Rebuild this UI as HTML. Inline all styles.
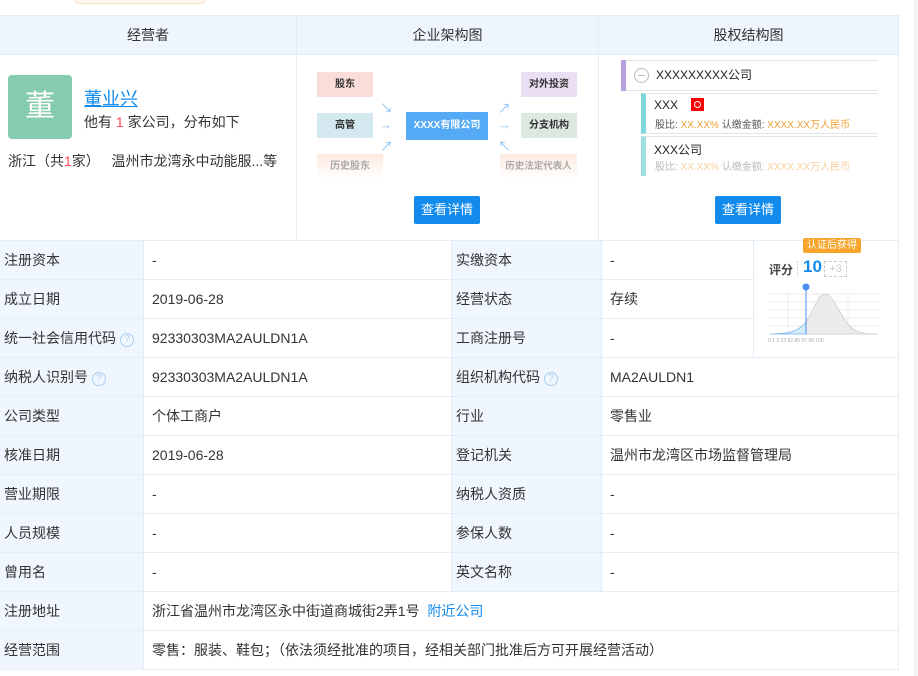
<!DOCTYPE html>
<html><head><meta charset="utf-8"><style>
*{margin:0;padding:0;box-sizing:border-box}
body{width:918px;height:676px;overflow:hidden;background:#fff;font-family:"Liberation Sans","Noto Sans CJK SC",sans-serif;color:#333;font-size:14px;position:relative}
.a{position:absolute}
.hd{position:absolute;top:15px;height:40px;background:#eef5fd;border:1px solid #e3edf8;text-align:center;line-height:38px;font-size:14px;color:#333}
.bd{position:absolute;top:54px;height:187px;border:1px solid #e3edf8;border-top:none}
.c{position:absolute;height:40px;border:1px solid #e3edf8;line-height:38px;padding-left:8px;white-space:nowrap}
.l{background:#f0f6fd;padding-left:4px}
.q{display:inline-block;width:14px;height:14px;border:1px solid #a9cdf0;border-radius:50%;color:#a9cdf0;font-size:10px;line-height:12px;text-align:center;vertical-align:1px;margin-left:4px}
.bx{position:absolute;height:25px;line-height:25px;text-align:center;font-size:10px;font-weight:bold;color:#333;white-space:nowrap;overflow:hidden}
.btn{position:absolute;width:66px;height:28px;background:#128bed;color:#fff;border-radius:2px;text-align:center;line-height:28px;font-size:13px}
.ar{position:absolute;color:#8cc4f5;font-size:13px}
</style></head><body>
<div class="a" style="left:75px;top:-2px;width:130px;height:6px;background:#fff8ec;border:1px solid #fae3c0;border-radius:3px"></div>
<div class="a" style="left:914px;top:0;width:4px;height:676px;background:#f3f3f3"></div>

<div class="hd" style="left:-1px;width:298px">经营者</div>
<div class="hd" style="left:296px;width:303px">企业架构图</div>
<div class="hd" style="left:598px;width:301px">股权结构图</div>
<div class="bd" style="left:-1px;width:298px"></div>
<div class="bd" style="left:296px;width:303px"></div>
<div class="bd" style="left:598px;width:301px"></div>

<div class="a" style="left:8px;top:75px;width:64px;height:64px;background:#85cbad;border-radius:4px;color:#fff;font-size:30px;text-align:center;line-height:64px">董</div>
<div class="a" style="left:84px;top:85px;font-size:18px;color:#128bed;text-decoration:underline">董业兴</div>
<div class="a" style="left:84px;top:112px;font-size:14px">他有 <span style="color:#fd485e">1</span> 家公司，分布如下</div>
<div class="a" style="left:8px;top:151px;font-size:14px">浙江（共<span style="color:#fd485e">1</span>家）&nbsp;&nbsp;&nbsp;温州市龙湾永中动能服...等</div>

<div class="bx" style="left:317px;top:72px;width:56px;background:#fadcd9">股东</div>
<div class="bx" style="left:317px;top:113px;width:56px;background:#d3e9ef">高管</div>
<div class="bx" style="left:317px;top:154px;width:66px;background:linear-gradient(#fde9df,#fff);color:#aaa">历史股东</div>
<div class="bx" style="left:406px;top:112px;width:82px;height:28px;line-height:28px;background:#55aaf5;color:#fff">XXXX有限公司</div>
<div class="bx" style="left:521px;top:72px;width:56px;background:#eadff2">对外投资</div>
<div class="bx" style="left:521px;top:113px;width:56px;background:#dbe9e0">分支机构</div>
<div class="bx" style="left:500px;top:154px;width:77px;background:linear-gradient(#fde9df,#fff);color:#aaa;font-size:9.5px">历史法定代表人</div>
<div class="ar" style="left:380px;top:98px">↘</div>
<div class="ar" style="left:379px;top:117px">→</div>
<div class="ar" style="left:380px;top:136px">↗</div>
<div class="ar" style="left:498px;top:98px">↗</div>
<div class="ar" style="left:498px;top:117px">→</div>
<div class="ar" style="left:498px;top:136px">↖</div>
<div class="btn" style="left:414px;top:196px">查看详情</div>

<div class="a" style="left:621px;top:60px;width:257px;height:31px;border-top:1px solid #e4e4e4;border-bottom:1px solid #e4e4e4"></div>
<div class="a" style="left:621px;top:60px;width:5px;height:31px;background:#b8a0dc"></div>
<div class="a" style="left:634px;top:68px;width:15px;height:15px;border:1px solid #bbb;border-radius:50%"></div>
<div class="a" style="left:638px;top:75px;width:7px;height:1px;background:#bbb"></div>
<div class="a" style="left:656px;top:66px;font-size:12px;color:#222">XXXXXXXXX公司</div>
<div class="a" style="left:641px;top:93px;width:237px;height:41px;border-top:1px solid #e4e4e4;border-bottom:1px solid #e4e4e4;border-left:5px solid #7fd9dc"></div>
<div class="a" style="left:654px;top:98px;font-size:12px;color:#222">XXX</div>
<div class="a" style="left:691px;top:98px;width:13px;height:13px;background:#f00"><div style="margin:3px;width:7px;height:7px;border:1px solid #fff;border-radius:50%"></div></div>
<div class="a" style="left:655px;top:116px;font-size:10px;color:#555">股比: <span style="color:#f0a030">XX.XX%</span> 认缴金额: <span style="color:#f0a030">XXXX.XX万人民币</span></div>
<div class="a" style="left:641px;top:136px;width:237px;height:40px;border-top:1px solid #e4e4e4;border-left:5px solid #9ddfe2;background:linear-gradient(rgba(255,255,255,0) 60%,#fff)"></div>
<div class="a" style="left:654px;top:141px;font-size:12px;color:#222">XXX公司</div>
<div class="a" style="left:655px;top:158px;font-size:10px;color:#bbb">股比: <span style="color:#f7cf9a">XX.XX%</span> 认缴金额: <span style="color:#f7cf9a">XXXX.XX万人民币</span></div>
<div class="btn" style="left:715px;top:196px">查看详情</div>

<!-- table -->
<div class="c l" style="left:-1px;top:240px;width:145px">注册资本</div><div class="c" style="left:143px;top:240px;width:309px">-</div>
<div class="c l" style="left:451px;top:240px;width:151px">实缴资本</div><div class="c" style="left:601px;top:240px;width:153px">-</div>
<div class="c l" style="left:-1px;top:279px;width:145px">成立日期</div><div class="c" style="left:143px;top:279px;width:309px">2019-06-28</div>
<div class="c l" style="left:451px;top:279px;width:151px">经营状态</div><div class="c" style="left:601px;top:279px;width:153px">存续</div>
<div class="c l" style="left:-1px;top:318px;width:145px">统一社会信用代码<span class="q">?</span></div><div class="c" style="left:143px;top:318px;width:309px">92330303MA2AULDN1A</div>
<div class="c l" style="left:451px;top:318px;width:151px">工商注册号</div><div class="c" style="left:601px;top:318px;width:153px">-</div>
<div class="c" style="left:753px;top:240px;width:146px;height:118px"></div>
<div class="a" style="left:803px;top:238px;width:58px;height:15px;background:#f9a52b;border-radius:2px;color:#fff;font-size:10px;text-align:center;line-height:15px">认证后获得</div>
<div class="a" style="left:769px;top:261px;font-size:12px;font-weight:bold;color:#444">评分</div>
<div class="a" style="left:797px;top:261px;width:1px;height:16px;border-left:1px dotted #ccc"></div>
<div class="a" style="left:803px;top:257px;font-size:17px;font-weight:bold;color:#128bed">10</div>
<div class="a" style="left:824px;top:261px;width:23px;height:16px;border:1px dashed #ccc;color:#ccc;font-size:11px;text-align:center;line-height:14px">+3</div>
<svg class="a" style="left:768px;top:282px" width="115" height="62" viewBox="0 0 115 62">
<g stroke="#eee" stroke-width="1"><line x1="2" y1="12" x2="110" y2="12"/><line x1="2" y1="20" x2="110" y2="20"/><line x1="2" y1="28" x2="110" y2="28"/><line x1="2" y1="36" x2="110" y2="36"/><line x1="2" y1="44" x2="110" y2="44"/><line x1="20" y1="10" x2="20" y2="52"/><line x1="50" y1="10" x2="50" y2="52"/><line x1="80" y1="10" x2="80" y2="52"/></g>
<path d="M2 52 C20 52 30 50 38 40 C46 28 50 12 57 12 C66 12 72 36 84 46 C92 52 100 52 110 52 Z" fill="#ebebeb" stroke="#d6d6d6"/>
<path d="M2 52 C20 52 30 50 38 40 L38 52 Z" fill="#d4edfa" stroke="#8cbff0"/>
<line x1="38" y1="6" x2="38" y2="52" stroke="#4a8ff0"/>
<circle cx="38" cy="5" r="3.5" fill="#4a8ff0"/>
<text x="0" y="60" font-size="5" fill="#aaa" font-family="Liberation Sans">0  1  3  13  52  85  97  99 100</text>
</svg>
<div class="c l" style="left:-1px;top:357px;width:145px">纳税人识别号<span class="q">?</span></div><div class="c" style="left:143px;top:357px;width:309px">92330303MA2AULDN1A</div>
<div class="c l" style="left:451px;top:357px;width:151px">组织机构代码<span class="q">?</span></div><div class="c" style="left:601px;top:357px;width:298px">MA2AULDN1</div>
<div class="c l" style="left:-1px;top:396px;width:145px">公司类型</div><div class="c" style="left:143px;top:396px;width:309px">个体工商户</div>
<div class="c l" style="left:451px;top:396px;width:151px">行业</div><div class="c" style="left:601px;top:396px;width:298px">零售业</div>
<div class="c l" style="left:-1px;top:435px;width:145px">核准日期</div><div class="c" style="left:143px;top:435px;width:309px">2019-06-28</div>
<div class="c l" style="left:451px;top:435px;width:151px">登记机关</div><div class="c" style="left:601px;top:435px;width:298px">温州市龙湾区市场监督管理局</div>
<div class="c l" style="left:-1px;top:474px;width:145px">营业期限</div><div class="c" style="left:143px;top:474px;width:309px">-</div>
<div class="c l" style="left:451px;top:474px;width:151px">纳税人资质</div><div class="c" style="left:601px;top:474px;width:298px">-</div>
<div class="c l" style="left:-1px;top:513px;width:145px">人员规模</div><div class="c" style="left:143px;top:513px;width:309px">-</div>
<div class="c l" style="left:451px;top:513px;width:151px">参保人数</div><div class="c" style="left:601px;top:513px;width:298px">-</div>
<div class="c l" style="left:-1px;top:552px;width:145px">曾用名</div><div class="c" style="left:143px;top:552px;width:309px">-</div>
<div class="c l" style="left:451px;top:552px;width:151px">英文名称</div><div class="c" style="left:601px;top:552px;width:298px">-</div>
<div class="c l" style="left:-1px;top:591px;width:145px">注册地址</div><div class="c" style="left:143px;top:591px;width:756px">浙江省温州市龙湾区永中街道商城街2弄1号&nbsp;&nbsp;<span style="color:#128bed">附近公司</span></div>
<div class="c l" style="left:-1px;top:630px;width:145px">经营范围</div><div class="c" style="left:143px;top:630px;width:756px">零售：服装、鞋包；（依法须经批准的项目，经相关部门批准后方可开展经营活动）</div>
</body></html>
